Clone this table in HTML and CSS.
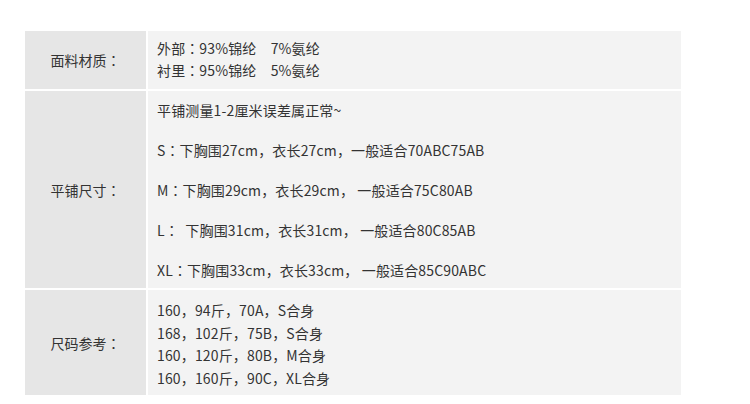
FILE: index.html
```html
<!DOCTYPE html>
<html lang="zh-CN">
<head>
<meta charset="utf-8">
<link rel="stylesheet" href="styles.css">
</head>
<body>
<div class="spec">
  <div class="label row1">面料材质<span class="colon" lang="ja">：</span></div>
  <div class="value row1">
    <p>外部<span class="colon" lang="ja">：</span>93%锦纶　7%氨纶</p>
    <p>衬里<span class="colon" lang="ja">：</span>95%锦纶　5%氨纶</p>
  </div>
  <div class="label row2">平铺尺寸<span class="colon" lang="ja">：</span></div>
  <div class="value row2 spaced">
    <p>平铺测量1-2厘米误差属正常~</p>
    <p>S<span class="colon" lang="ja">：</span>下胸围27cm，衣长27cm，一般适合70ABC75AB</p>
    <p>M<span class="colon" lang="ja">：</span>下胸围29cm，衣长29cm， 一般适合75C80AB</p>
    <p>L<span class="colon" lang="ja">：</span>  下胸围31cm，衣长31cm， 一般适合80C85AB</p>
    <p>XL<span class="colon" lang="ja">：</span>下胸围33cm，衣长33cm， 一般适合85C90ABC</p>
  </div>
  <div class="label row3">尺码参考<span class="colon" lang="ja">：</span></div>
  <div class="value row3">
    <p>160，94斤，70A，S合身</p>
    <p>168，102斤，75B，S合身</p>
    <p>160，120斤，80B，M合身</p>
    <p>160，160斤，90C，XL合身</p>
  </div>
</div>
</body>
</html>
```
FILE: styles.css
```css
html, body {
  margin: 0;
  padding: 0;
  background: #ffffff;
}
body {
  font-family: "Noto Sans CJK SC", "Noto Sans", sans-serif;
  font-size: 14px;
  color: #333333;
}
.spec {
  margin: 31px 0 0 25px;
  width: 656px;
  display: grid;
  grid-template-columns: 121px 533px;
  grid-template-rows: 58px 197px 105px;
  column-gap: 2px;
  row-gap: 2px;
}
.label {
  background: #e6e6e6;
  display: flex;
  align-items: center;
  justify-content: center;
}
.value {
  background: #f3f3f3;
  padding-left: 9px;
  display: flex;
  flex-direction: column;
  letter-spacing: 0.15px;
}
.value p {
  margin: 0;
  white-space: pre;
}
.colon {
  font-family: "Noto Sans CJK JP", "Noto Sans CJK SC", sans-serif;
  letter-spacing: 0;
}
.row1.value {
  padding-top: 6px;
  line-height: 22px;
}
.row2.value {
  padding-top: 9px;
  line-height: 20px;
  gap: 20px;
}
.row3.value {
  padding-top: 9px;
  line-height: 22.6px;
}
```
